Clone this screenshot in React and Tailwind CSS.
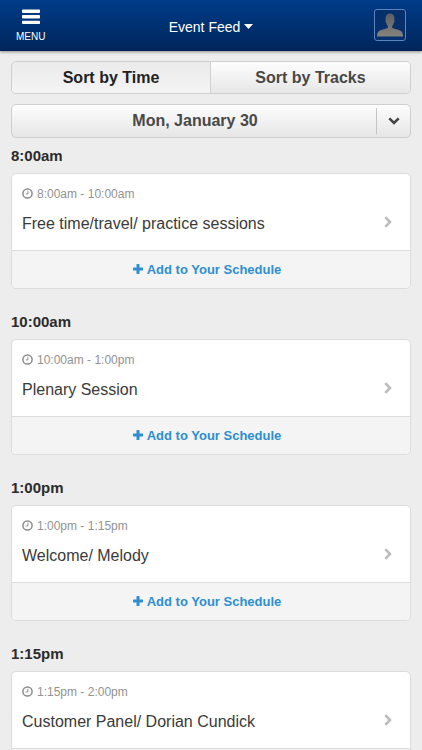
import { useState } from "react";
import clsx from "clsx";

const sessions = [
  { start: "8:00am", end: "10:00am", title: "Free time/travel/ practice sessions" },
  { start: "10:00am", end: "1:00pm", title: "Plenary Session" },
  { start: "1:00pm", end: "1:15pm", title: "Welcome/ Melody" },
  { start: "1:15pm", end: "2:00pm", title: "Customer Panel/ Dorian Cundick" },
];

const ClockIcon = () => (
  <svg viewBox="0 0 11 11" className="w-[11px] h-[11px] mb-0.5" fill="none" stroke="#8c8c8c" aria-hidden="true">
    <circle cx="5.5" cy="5.5" r="4.6" strokeWidth="1.5" />
    <path d="M5.9 2.8V5.9H3.7" strokeWidth="1" />
  </svg>
);

const PlusIcon = () => (
  <svg viewBox="0 0 10 10" className="w-2.5 h-2.5 mb-0.5" fill="#2e8fd0" aria-hidden="true">
    <path d="M3.9 0h2.2q.4 0 .4.4v3.1h3.1q.4 0 .4.4v2.2q0 .4-.4.4H6.5v3.1q0 .4-.4.4H3.9q-.4 0-.4-.4V6.5H.4Q0 6.5 0 6.1V3.9q0-.4.4-.4h3.1V.4Q3.5 0 3.9 0z" />
  </svg>
);

const TopBar = () => (
  <header className="relative z-10 shrink-0 h-[51px] px-4 grid grid-cols-[1fr_auto_1fr] items-center bg-linear-to-b from-[#003c88] to-[#00265c] border-b border-[#001f50] shadow-[0_1px_3px_rgba(0,0,0,0.4)] text-white">
    <button className="justify-self-start flex flex-col items-center gap-1.5 pt-0.5">
      <svg viewBox="0 0 18 16" className="w-[18px] h-4" fill="#fff" aria-hidden="true">
        <rect y="0.5" width="18" height="3.4" rx="0.8" />
        <rect y="6.1" width="18" height="3.4" rx="0.8" />
        <rect y="11.7" width="18" height="3.4" rx="0.8" />
      </svg>
      <span className="text-[10px] leading-3">MENU</span>
    </button>
    <button className="flex items-center gap-1 text-sm pt-1" aria-haspopup="menu">
      Event Feed
      <svg viewBox="0 0 9 5" className="w-[9px] h-[5px] mb-0.5" fill="#fff" aria-hidden="true">
        <path d="M0 0h9L4.5 5z" />
      </svg>
    </button>
    <button
      aria-label="Profile"
      className="justify-self-end w-8 h-8 overflow-hidden rounded-[3px] border border-[#5c84bd] bg-[#06306c]"
    >
      <svg viewBox="0 0 30 30" className="w-full h-full" aria-hidden="true">
        <defs>
          <linearGradient id="person" x1="0" y1="0" x2="0" y2="1">
            <stop offset="0" stopColor="#5c5f64" />
            <stop offset="1" stopColor="#85837c" />
          </linearGradient>
        </defs>
        <path
          fill="url(#person)"
          d="M15 3.500c-3 0-4.500 2.100-4.400 5 0 .8.1 1.300.2 1.800-.8.5-.3 2.200.5 2.600.3 1.400.8 2.400 1.500 3.100v1.500c0 1.200-4.800 1.600-7.800 2.900C2.900 21.300 2.100 23 2 26.500h26c-.1-3.500-.9-5.200-3-6.100-3-1.300-7.800-1.700-7.800-2.900V16c.7-.7 1.200-1.700 1.500-3.100.8-.4 1.300-2.100.5-2.600.1-.5.2-1 .2-1.800.1-2.900-1.400-5-4.400-5z"
        />
      </svg>
    </button>
  </header>
);

const SortToggle = () => {
  const [sort, setSort] = useState("Time");

  return (
    <div className="flex h-[33px] overflow-hidden rounded-[5px] border border-[#cfcfcf]">
      {["Time", "Tracks"].map((name) => (
        <button
          key={name}
          onClick={() => setSort(name)}
          aria-pressed={sort === name}
          className={clsx(
            "w-1/2 font-bold text-base border-r border-[#cfcfcf] last:border-r-0",
            sort === name
              ? "bg-linear-to-b from-[#ebebeb] to-[#f4f4f4] text-[#222]"
              : "bg-linear-to-b from-[#fdfdfd] to-[#e7e7e7] text-[#484848]"
          )}
        >
          Sort by {name}
        </button>
      ))}
    </div>
  );
};

const DayPicker = () => (
  <div className="relative mt-2.5">
    <select
      aria-label="Day"
      className="block w-full h-[34px] pl-0 pr-8 appearance-none rounded-[5px] border border-[#cfcfcf] bg-linear-to-b from-[#fdfdfd] to-[#e6e6e6] text-center [text-align-last:center] font-bold text-base text-[#484848]"
    >
      <option>Mon, January 30</option>
    </select>
    <span className="pointer-events-none absolute inset-y-1 right-0 w-[35px] border-l border-[#c4c4c4] flex items-center justify-center">
      <svg viewBox="0 0 12 8" className="w-3 h-2" fill="none" stroke="#444" strokeWidth="2.6" aria-hidden="true">
        <path d="M1.300 1.400L6 5.900l4.700-4.500" />
      </svg>
    </span>
  </div>
);

const Session = ({ start, end, title }) => (
  <section className="mb-[23px]">
    <h2 className="h-[27px] leading-5 font-bold text-[15px] text-[#2b2b2b]">{start}</h2>
    <div className="overflow-hidden rounded-[5px] border border-[#dcdcdc] bg-white">
      <a href="#session" className="flex items-end justify-between h-[76px] px-2.5 pb-4">
        <div>
          <p className="flex items-center gap-1 text-xs text-[#929292]">
            <ClockIcon />
            {start} - {end}
          </p>
          <h3 className="mt-3 text-base leading-5 text-[#3a3a3a]">{title}</h3>
        </div>
        <svg viewBox="0 0 8 12" className="w-2 h-3 mr-2 mb-1.5" fill="none" stroke="#bdbdbd" strokeWidth="2.600" aria-hidden="true">
          <path d="M1.300 1.200L6 6l-4.700 4.800" />
        </svg>
      </a>
      <button className="w-full h-[38px] pr-2 flex items-center justify-center gap-1 border-t border-[#dcdcdc] bg-[#f4f4f4] font-bold text-[13px] text-[#2e8fd0]">
        <PlusIcon />
        Add to Your Schedule
      </button>
    </div>
  </section>
);

const App = () => (
  <div className="h-screen flex flex-col bg-[#ededed] font-['Liberation_Sans',Arial,sans-serif]">
    <TopBar />
    <main className="flex-1 overflow-y-auto [scrollbar-width:none] px-[11px] pt-2.5">
      <SortToggle />
      <DayPicker />
      <div className="mt-2">
        {sessions.map((session) => (
          <Session key={session.start} {...session} />
        ))}
      </div>
    </main>
  </div>
);

export default App;
